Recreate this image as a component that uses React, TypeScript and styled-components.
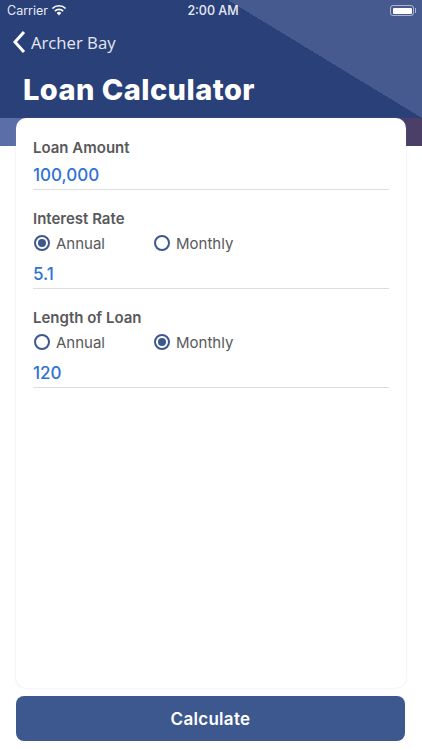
import React from 'react'
import styled, { createGlobalStyle } from 'styled-components'

const GlobalStyle = createGlobalStyle`
  html, body {
    margin: 0;
    padding: 0;
    background: #fff;
  }
  body {
    font-family: "Inter", "Open Sans", sans-serif;
  }
  * {
    box-sizing: border-box;
  }
`

const Page = styled.div`
  width: 422px;
  height: 750px;
  overflow: hidden;
  background: #fff;
`

const Header = styled.div`
  height: 146px;
  color: #fff;
  background:
    linear-gradient(to top right, #2a4078 50%, #465a8f 50%) 228px 0 / 194px 118px no-repeat,
    linear-gradient(to right, #5c6ea8 0 50%, #4b3f68 50% 100%) 0 118px / 100% 28px no-repeat,
    linear-gradient(#2a4078, #2a4078) 0 0 / 100% 118px no-repeat;
`

const StatusBar = styled.div`
  display: grid;
  grid-template-columns: 1fr auto 1fr;
  align-items: center;
  height: 21px;
  padding: 0 7px;
  font-size: 12.5px;
  color: #e8ebf3;
`

const StatusLeft = styled.div`
  display: flex;
  align-items: center;
  gap: 3px;

  svg {
    margin-top: -2px;
  }
`

const StatusTime = styled.div`
  font-weight: 500;
  font-size: 12.5px;
  transform: translateX(2px);
`

const Battery = styled.div`
  position: relative;
  justify-self: end;
  width: 24px;
  height: 11px;
  padding: 1.5px;
  margin-right: 1px;
  border: 1px solid rgba(255, 255, 255, 0.55);
  border-radius: 3px;

  &::after {
    content: '';
    position: absolute;
    top: 2px;
    right: -3px;
    width: 1.5px;
    height: 5px;
    background: rgba(255, 255, 255, 0.55);
  }
`

const BatteryFill = styled.div`
  height: 100%;
  background: #fff;
  border-radius: 1px;
`

const BackRow = styled.div`
  display: flex;
  align-items: center;
  gap: 5px;
  height: 30px;
  margin-top: 6px;
  padding-left: 12px;
  font-size: 16.7px;
  font-family: "Open Sans", sans-serif;
  color: #e6e9f2;
`

const Title = styled.h1`
  margin: 16px 0 0 23px;
  font-size: 29px;
  line-height: 34px;
  font-weight: 800;
  letter-spacing: 0.45px;
`

const Card = styled.div`
  position: relative;
  height: 570px;
  margin: -28px 16px 0 16px;
  padding: 19px 17px 0 17px;
  background: #fff;
  border-radius: 10px;
  box-shadow: 0 0 2px rgba(120, 140, 220, 0.3);
`

const Group = styled.div`
  margin-top: 18px;
`

const Label = styled.div`
  font-size: 15px;
  line-height: 21px;
  font-weight: 600;
  color: #58595b;
`

const Value = styled.div`
  height: 32px;
  padding-top: 5px;
  font-size: 17px;
  line-height: 24px;
  font-weight: 500;
  color: #2f72d8;
  border-bottom: 1px solid #dcdde0;
`

const RadioRow = styled.div`
  display: flex;
  height: 28px;
  align-items: center;
  padding-left: 1px;
`

const RadioItem = styled.div`
  display: flex;
  align-items: center;
  gap: 6px;
  width: 120px;
`

const RadioRing = styled.span`
  display: flex;
  align-items: center;
  justify-content: center;
  width: 16px;
  height: 16px;
  border: 2px solid #3d578f;
  border-radius: 50%;
`

const RadioDot = styled.span`
  width: 8px;
  height: 8px;
  background: #3d578f;
  border-radius: 50%;
`

const RadioLabel = styled.span`
  font-size: 15px;
  color: #58595b;
`

const CalculateButton = styled.button`
  display: block;
  width: 389px;
  height: 45px;
  margin: 8px 0 0 16px;
  padding: 0;
  border: none;
  border-radius: 8px;
  background: #3d578f;
  color: #fff;
  font-family: inherit;
  font-size: 17px;
  font-weight: 600;
  letter-spacing: 0.3px;
`

const fields = [
  { label: 'Interest Rate', value: '5.1', selected: 'Annual' },
  { label: 'Length of Loan', value: '120', selected: 'Monthly' },
]

const Radio = ({ label, checked }: { label: string; checked: boolean }) => (
  <RadioItem>
    <RadioRing>{checked && <RadioDot />}</RadioRing>
    <RadioLabel>{label}</RadioLabel>
  </RadioItem>
)

export default function App() {
  return (
    <Page>
      <GlobalStyle />
      <Header>
        <StatusBar>
          <StatusLeft>
            Carrier
            <svg width="16" height="12" viewBox="0 0 16 12">
              <path d="M8 11.4 5.7 8.9a3.3 3.3 0 0 1 4.6 0z" fill="#fff" />
              <path d="M3.9 7.1a5.8 5.8 0 0 1 8.2 0" fill="none" stroke="#fff" strokeWidth="1.7" />
              <path d="M1.4 4.5a9.3 9.3 0 0 1 13.2 0" fill="none" stroke="#fff" strokeWidth="1.7" />
            </svg>
          </StatusLeft>
          <StatusTime>2:00 AM</StatusTime>
          <Battery>
            <BatteryFill />
          </Battery>
        </StatusBar>
        <BackRow>
          <svg width="14" height="24" viewBox="0 0 14 24">
            <path d="M12 2 3 12l9 10" fill="none" stroke="#fff" strokeWidth="3" />
          </svg>
          Archer Bay
        </BackRow>
        <Title>Loan Calculator</Title>
      </Header>
      <Card>
        <Label>Loan Amount</Label>
        <Value>100,000</Value>
        {fields.map((f) => (
          <Group key={f.label}>
            <Label>{f.label}</Label>
            <RadioRow>
              <Radio label="Annual" checked={f.selected === 'Annual'} />
              <Radio label="Monthly" checked={f.selected === 'Monthly'} />
            </RadioRow>
            <Value>{f.value}</Value>
          </Group>
        ))}
      </Card>
      <CalculateButton>Calculate</CalculateButton>
    </Page>
  )
}
